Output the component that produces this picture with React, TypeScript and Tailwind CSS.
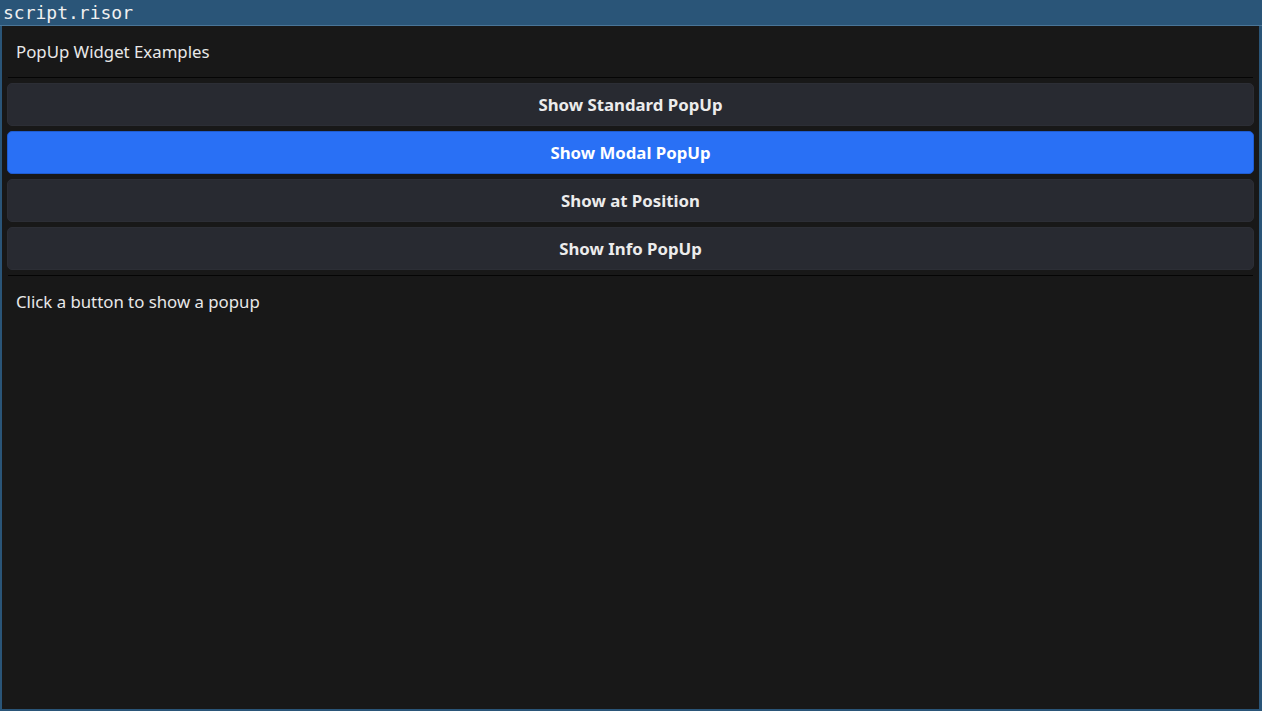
import React from "react";

const buttons = [
  { label: "Show Standard PopUp", primary: false },
  { label: "Show Modal PopUp", primary: true },
  { label: "Show at Position", primary: false },
  { label: "Show Info PopUp", primary: false },
];

export default function App() {
  return (
    <div className="w-[1262px] h-[711px] bg-[#2a5578] flex flex-col overflow-hidden">
      <div className="h-[26px] border-b border-[#4a7597] flex items-center px-[3px] text-[18px] leading-none text-[#f0f0f0] [font-family:'DejaVu_Sans_Mono',monospace]">
        script.risor
      </div>
      <div className="flex-1 ml-[2px] mr-[3px] mb-[2px] bg-[#181818] px-[5px] flex flex-col text-[#e8e8e8] [font-family:'Noto_Sans',sans-serif]">
        <div className="h-[51px] flex items-center pl-[9px] text-[16.8px]">PopUp Widget Examples</div>
        <div className="h-px bg-[#050505] mx-[1px]" />
        <div className="flex flex-col gap-[5px] pt-[5px] pb-[5px]">
          {buttons.map((b) => (
            <div
              key={b.label}
              className={
                b.primary
                  ? "h-[43px] rounded-[5px] bg-[#2970f5] border border-[#1f5cd0] flex items-center justify-center text-[16.8px] font-bold text-white"
                  : "h-[43px] rounded-[5px] bg-[#282a31] border border-[#2c2e35] flex items-center justify-center text-[16.8px] font-bold text-[#ececec]"
              }
            >
              {b.label}
            </div>
          ))}
        </div>
        <div className="h-px bg-[#050505] mx-[1px]" />
        <div className="h-[51px] flex items-center pl-[9px] text-[16.8px]">Click a button to show a popup</div>
      </div>
    </div>
  );
}
